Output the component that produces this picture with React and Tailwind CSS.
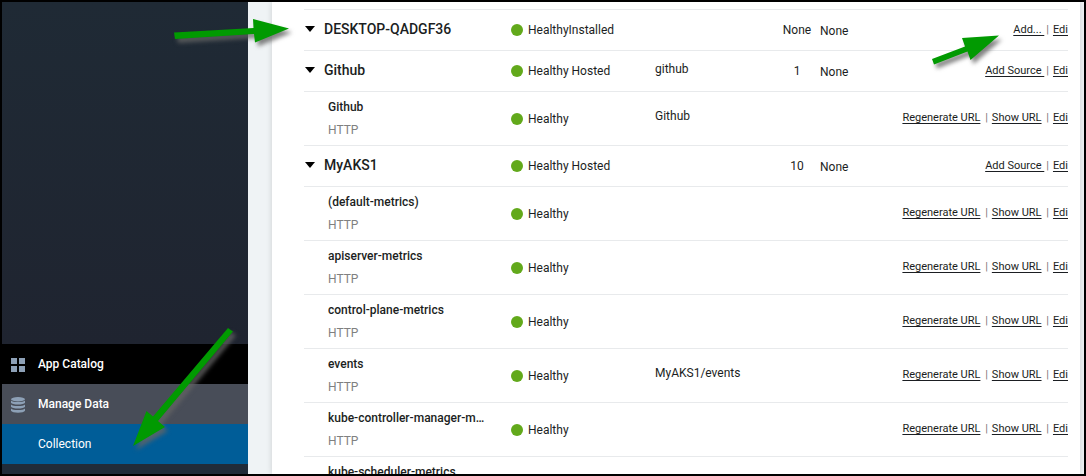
import React from "react";

const menu = [
  { label: "App Catalog", icon: "grid", style: "bg-black font-medium" },
  { label: "Manage Data", icon: "database", style: "bg-[#484d58] font-medium" },
  { label: "Collection", icon: null, style: "bg-[#005d98]" },
];

const rows = [
  { name: "DESKTOP-QADGF36", collector: true, status: "HealthyInstalled", count: "None", add: "Add... " },
  { name: "Github", collector: true, status: "Healthy Hosted", category: "github", count: "1", add: "Add Source " },
  { name: "Github", category: "Github" },
  { name: "MyAKS1", collector: true, status: "Healthy Hosted", count: "10", add: "Add Source " },
  { name: "(default-metrics)" },
  { name: "apiserver-metrics" },
  { name: "control-plane-metrics" },
  { name: "events", category: "MyAKS1/events" },
  { name: "kube-controller-manager-metrics" },
  { name: "kube-scheduler-metrics" },
];

function MenuIcon({ icon }) {
  if (icon === "grid") {
    return (
      <svg width="14" height="14" viewBox="0 0 14 14" fill="#8da0b6" aria-hidden="true">
        <path d="M0 0h6v6H0zM8 0h6v6H8zM0 8h6v6H0zM8 8h6v6H8z" />
      </svg>
    );
  }
  if (icon === "database") {
    return (
      <svg width="14" height="16" viewBox="0 0 14 16" fill="#8da0b6" aria-hidden="true">
        <ellipse cx="7" cy="2.2" rx="7" ry="2.2" />
        <path d="M0 3.6c1.6 2 12.4 2 14 0v2.2c-1 2.4-13 2.4-14 0z" />
        <path d="M0 7.6c1.6 2 12.4 2 14 0v2.2c-1 2.4-13 2.4-14 0z" />
        <path d="M0 11.6c1.6 2 12.4 2 14 0v2.2c-1 2.6-13 2.6-14 0z" />
      </svg>
    );
  }
  return null;
}

function Sidebar() {
  return (
    <nav className="flex w-[246px] shrink-0 flex-col bg-[#212c39] pb-[10px]">
      <div className="grow bg-linear-to-b from-[#1f2a35] to-[#1f2430]" />
      {menu.map((item) => (
        <a
          key={item.label}
          href="#"
          className={`flex h-10 items-center pl-[9px] text-xs text-white ${item.style}`}
        >
          <span className="w-[27px] shrink-0 pt-0.5">
            <MenuIcon icon={item.icon} />
          </span>
          {item.label}
        </a>
      ))}
    </nav>
  );
}

function Separator() {
  return <span className="mr-1 ml-0.5 text-[#777]">|</span>;
}

function Actions({ row }) {
  const link = "whitespace-pre underline underline-offset-2";
  return (
    <>
      {row.collector ? (
        <a href="#" className={link}>{row.add}</a>
      ) : (
        <>
          <a href="#" className={link}>Regenerate URL</a> <Separator />
          <a href="#" className={link}>Show URL</a>{" "}
        </>
      )}
      <Separator />
      <a href="#" className={link}>Edi</a>
    </>
  );
}

function Row({ row }) {
  const group = row.collector;
  return (
    <tr className={`border-b border-[#e8eaec] align-top ${group ? "h-[41px]" : "h-[54px]"}`}>
      {group ? (
        <td className="pt-[9px] text-sm font-medium">
          <button type="button" className="flex items-center">
            <svg width="20" height="6" viewBox="0 0 20 6" aria-hidden="true">
              <path d="M1 0h10L6 6z" />
            </svg>
            {row.name}
          </button>
        </td>
      ) : (
        <td className="pt-1 pl-6 leading-[23px]">
          <div className="w-40 truncate font-medium">{row.name}</div>
          <div className="text-[#808080]">HTTP</div>
        </td>
      )}
      <td className={group ? "pt-[10px]" : "pt-[17px]"}>
        <span className="flex items-center gap-[5px]">
          <span className="size-3 rounded-full bg-[#62a91b]" />
          {row.status || "Healthy"}
        </span>
      </td>
      <td className={group ? "pt-2" : "pt-[14px]"}>{row.category}</td>
      <td className="pt-[10px] text-center">{row.count}</td>
      <td className="pt-[11px] pl-2">{group && "None"}</td>
      <td className={`text-right text-[11px] whitespace-nowrap ${group ? "pt-[10px]" : "pt-4"}`}>
        <Actions row={row} />
      </td>
    </tr>
  );
}

function Arrows() {
  return (
    <svg
      className="pointer-events-none absolute -top-0.5 -left-0.5 drop-shadow-[3px_4px_2px_rgba(100,100,100,0.8)]"
      width="1086"
      height="476"
      viewBox="0 0 1086 476"
      fill="#019a01"
      aria-hidden="true"
    >
      <path d="M174 32.5L253.5 28L253 19L289 28.5L255 42.5L254 34L175 39z" />
      <path d="M932 59L965 46.5L962 38L999 35.5L970.5 60L967.5 51.5L934 64.5z" />
      <path d="M228 328L153 416.5L146.5 411L133 446L165 427L158 421L233 331.5z" />
    </svg>
  );
}

function App() {
  return (
    <div className="relative flex h-screen overflow-hidden border-2 border-black bg-[#eff3f5] font-[Roboto,sans-serif]">
      <Sidebar />
      <main className="mr-1 ml-6 min-w-0 grow bg-white pt-[7px] pr-3 pl-8 text-xs leading-5 text-[#1b1e22] shadow-[0_0_6px_rgba(0,0,0,0.15)]">
        <table className="w-full table-fixed border-collapse border-t border-[#e8eaec]">
          <colgroup>
            <col className="w-[207px]" />
            <col className="w-[144px]" />
            <col className="w-[127px]" />
            <col className="w-[30px]" />
            <col className="w-[60px]" />
            <col />
          </colgroup>
          <tbody>
            {rows.map((row, i) => (
              <Row key={i} row={row} />
            ))}
          </tbody>
        </table>
      </main>
      <Arrows />
    </div>
  );
}

export default App;
